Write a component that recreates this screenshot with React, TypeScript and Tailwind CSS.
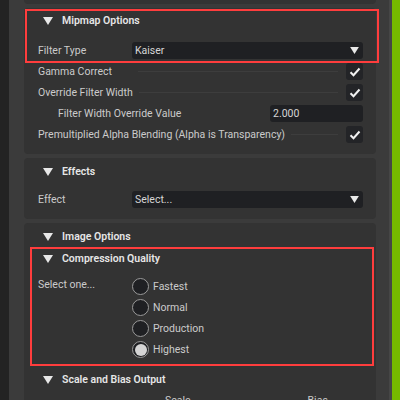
import type { ReactNode } from "react";

function Caret({ small }: { small?: boolean }) {
    return (
        <svg
            width={small ? 9 : 10}
            height={small ? 7 : 8}
            viewBox="0 0 10 8"
        >
            <path d="M0 0 L10 0 L5 8 Z" fill="#e8e8e8" />
        </svg>
    );
}

function Header({ title, h }: { title: string; h: string }) {
    return (
        <div className={`flex items-center pl-[19px] ${h}`}>
            <Caret />
            <span className="ml-[9px] text-[10.5px] font-semibold text-[#e6e6e6]">
                {title}
            </span>
        </div>
    );
}

function Row({ children }: { children: ReactNode }) {
    return (
        <div className="flex items-center h-[21px] pl-[14px] pr-[13px]">
            {children}
        </div>
    );
}

function Label({ text, indent }: { text: string; indent?: boolean }) {
    return (
        <span
            className={`min-w-[94px] whitespace-nowrap text-[10.5px] text-[#cbcbcb] ${indent ? "pl-[20px]" : ""}`}
        >
            {text}
        </span>
    );
}

function Dropdown({ value }: { value: string }) {
    return (
        <div className="flex-1 h-[17px] rounded-[3px] bg-[#1f2023] flex items-center justify-between pl-[3px] pr-[4px]">
            <span className="text-[10.5px] text-[#d6d6d6]">{value}</span>
            <Caret small />
        </div>
    );
}

function CheckRow({ label }: { label: string }) {
    return (
        <Row>
            <Label text={label} />
            <div className="flex-1 h-px bg-[#3d3d3d] ml-[6px] mr-[8px]" />
            <div className="w-[17px] h-[17px] rounded-[3px] bg-[#232427] flex items-center justify-center">
                <svg width="12" height="10" viewBox="0 0 12 10">
                    <path
                        d="M1.5 5.2 L4.5 8.2 L10.5 1.5"
                        stroke="#f0f0f0"
                        strokeWidth="2"
                        fill="none"
                    />
                </svg>
            </div>
        </Row>
    );
}

function Radio({ label, checked }: { label: string; checked?: boolean }) {
    return (
        <div className="flex items-center h-[21px]">
            <div className="w-[17px] h-[17px] rounded-full border-[1.5px] border-[#9a9a9a] bg-[#1f2023] flex items-center justify-center">
                {checked && (
                    <div className="w-[12px] h-[12px] rounded-full bg-[#d4d4d4]" />
                )}
            </div>
            <span className="ml-[4px] text-[10.5px] text-[#cbcbcb]">{label}</span>
        </div>
    );
}

export default function App() {
    return (
        <div className="relative w-[400px] h-[400px] overflow-hidden flex bg-[#3b3b3b] font-['Roboto','Liberation_Sans',sans-serif]">
            <div className="w-[9px] bg-[#232323]" />
            <div className="w-[15px]" />
            <div className="w-[352px] flex flex-col gap-[4px] overflow-hidden">
                <div className="shrink-0 h-[4px] rounded-b-[4px] bg-[#333333]" />

                <section className="shrink-0 rounded-[4px] bg-[#333333] pb-[9px]">
                    <Header title="Mipmap Options" h="h-[26px]" />
                    <div className="h-[6px]" />
                    <Row>
                        <Label text="Filter Type" />
                        <Dropdown value="Kaiser" />
                    </Row>
                    <CheckRow label="Gamma Correct" />
                    <CheckRow label="Override Filter Width" />
                    <Row>
                        <Label text="Filter Width Override Value" indent />
                        <div className="flex-1" />
                        <div className="w-[93px] h-[17px] rounded-[3px] bg-[#1f2023] flex items-center pl-[3px]">
                            <span className="text-[10.5px] text-[#d6d6d6]">2.000</span>
                        </div>
                    </Row>
                    <CheckRow label="Premultiplied Alpha Blending (Alpha is Transparency)" />
                </section>

                <section className="shrink-0 rounded-[4px] bg-[#333333] pb-[9px]">
                    <Header title="Effects" h="h-[28px]" />
                    <div className="h-[3px]" />
                    <Row>
                        <Label text="Effect" />
                        <Dropdown value="Select..." />
                    </Row>
                </section>

                <section className="shrink-0 flex-1 rounded-t-[4px] bg-[#333333]">
                    <Header title="Image Options" h="h-[27px]" />
                    <Header title="Compression Quality" h="h-[17px]" />
                    <div className="flex pl-[14px] pt-[9px]">
                        <span className="min-w-[94px] pt-[1px] text-[10.5px] text-[#cbcbcb]">
                            Select one...
                        </span>
                        <div className="flex flex-col">
                            <Radio label="Fastest" />
                            <Radio label="Normal" />
                            <Radio label="Production" />
                            <Radio label="Highest" checked />
                        </div>
                    </div>
                    <div className="h-[10px]" />
                    <Header title="Scale and Bias Output" h="h-[20px]" />
                    <div className="flex text-[10.5px] text-[#cbcbcb] pt-[3px]">
                        <span className="ml-[141px]">Scale</span>
                        <span className="ml-[117px]">Bias</span>
                    </div>
                </section>
            </div>
            <div className="w-[13px]" />
            <div className="w-[3px] bg-[#464646]" />
            <div className="flex-1 bg-[#76b900]" />

            <div className="absolute left-[25px] top-[9px] w-[354px] h-[54px] border-2 border-[#ff3d3d]" />
            <div className="absolute left-[30px] top-[247px] w-[344px] h-[119px] border-2 border-[#ff3d3d]" />
        </div>
    );
}
